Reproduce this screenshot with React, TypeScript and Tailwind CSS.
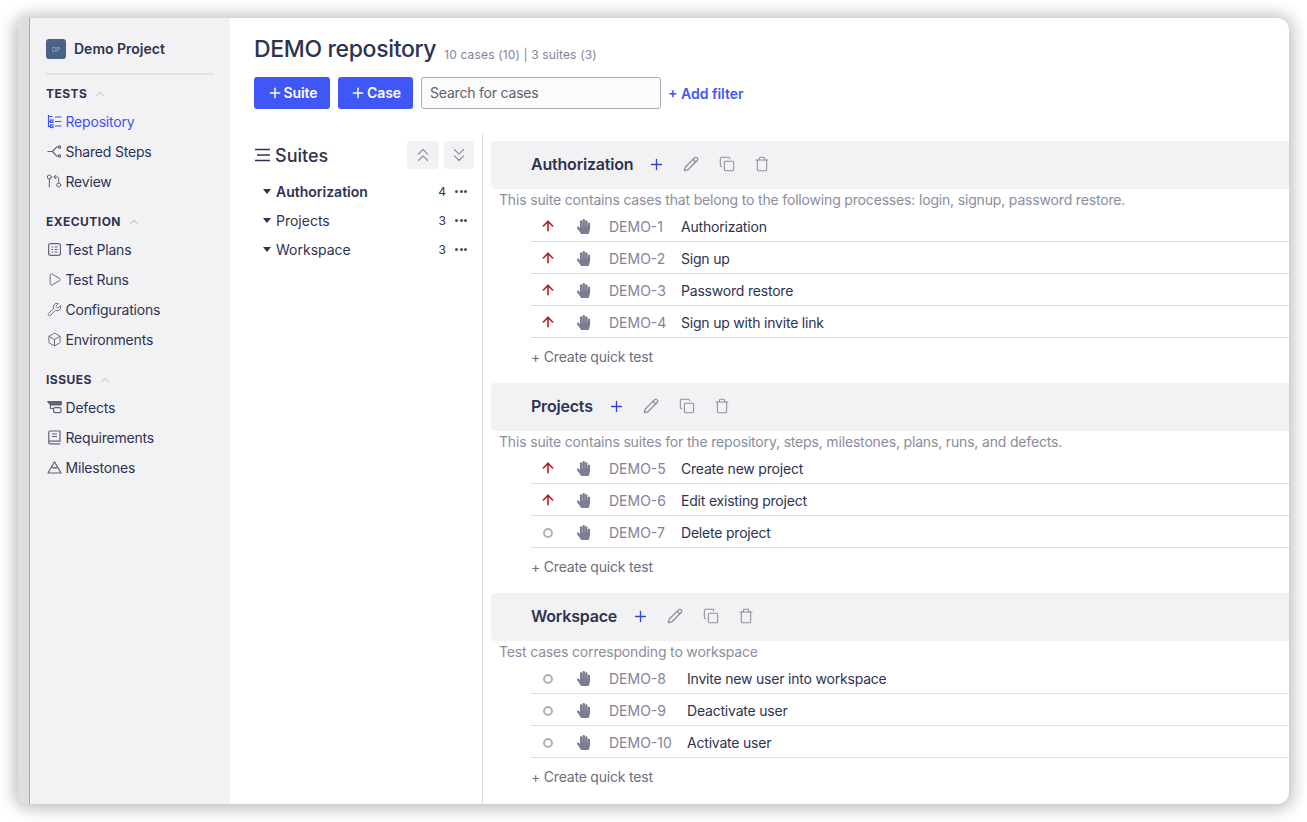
import { ArrowUp, Box, ChevronsDown, ChevronsUp, ChevronUp, Copy, GitPullRequestArrow, Pencil, Play, Plus, Trash, Wrench } from "lucide-react";
import { FaHandPaper } from "react-icons/fa";
import type { ReactNode } from "react";

const iconClass = "w-[15px] h-[15px] text-[#5f6478]";

function RepoIcon() {
    return (
        <svg viewBox="0 0 15 15" fill="none" stroke="#3f51f5" strokeWidth="1.2" className="w-[15px] h-[15px]">
            <path d="M1.5 1v12M1.5 2.5h4M1.5 7.5h2M1.5 12.5h2" />
            <path d="M8 3h6.5M8 7.5h6.5M8 12h6.5" />
            <rect x="3.5" y="6" width="2.5" height="2.5" />
            <rect x="3.5" y="11" width="2.5" height="2.5" />
        </svg>
    );
}

function StepsIcon() {
    return (
        <svg viewBox="0 0 15 15" fill="none" stroke="#5f6478" strokeWidth="1.2" className={iconClass}>
            <path d="M0.5 7.5h5l4-4.5h2M5.5 7.5l4 4.5h2" />
            <circle cx="12.5" cy="3" r="1.2" />
            <circle cx="12.5" cy="12" r="1.2" />
        </svg>
    );
}

function PlanIcon() {
    return (
        <svg viewBox="0 0 15 15" fill="none" stroke="#5f6478" strokeWidth="1.2" className={iconClass}>
            <rect x="1.6" y="1.6" width="11.8" height="11.8" rx="2" />
            <path d="M4.5 5h1.5M4.5 7.5h1.5M4.5 10h1.5M7.5 5h3M7.5 7.5h3M7.5 10h3" />
        </svg>
    );
}

function DefectIcon() {
    return (
        <svg viewBox="0 0 15 15" fill="none" stroke="#5f6478" strokeWidth="1.2" className={iconClass}>
            <path d="M0.7 1.5h13.6v2.5a1 1 0 0 1-1 1H3.5z" fill="#5f6478" />
            <path d="M3.5 5v3.5h3" />
            <rect x="6.5" y="7.7" width="7.5" height="5" rx="1.6" />
        </svg>
    );
}

function BookIcon() {
    return (
        <svg viewBox="0 0 15 15" fill="none" stroke="#5f6478" strokeWidth="1.2" className={iconClass}>
            <path d="M1.8 12V2.2A1.2 1.2 0 0 1 3 1h10v10.2H3a1 1 0 0 0-1.2 1A1.2 1.2 0 0 0 3 13.8h10.2" />
            <path d="M5 4h5M5 6.5h5" />
        </svg>
    );
}

function MountainIcon() {
    return (
        <svg viewBox="0 0 15 15" fill="none" stroke="#5f6478" strokeWidth="1.2" strokeLinejoin="round" className={iconClass}>
            <path d="M7.5 1.8L14 13H1z" />
            <path d="M4.6 6.8l2 1.6 1-1 1.2 1 1.6-1.6" />
        </svg>
    );
}

function MenuItem({ icon, label, active }: { icon: ReactNode; label: string; active?: boolean }) {
    return (
        <div className={"h-[30px] flex items-center gap-[3.5px] text-[14px] tracking-[-0.2px] " + (active ? "text-[#3f51f5]" : "text-[#2d3350]")}>
            <span className="w-[16px] flex justify-center">{icon}</span>
            <span>{label}</span>
        </div>
    );
}

function GroupTitle({ title }: { title: string }) {
    return (
        <div className="flex items-center gap-[6px] h-[22px] text-[12px] font-bold tracking-[0.45px] text-[#2d3350]">
            {title}
            <ChevronUp className="w-[14px] h-[14px] text-[#cfd0d6]" />
        </div>
    );
}

function Priority({ high }: { high: boolean }) {
    if (high) return <ArrowUp className="w-[16px] h-[16px] mb-[1px] text-[#b71c1c]" strokeWidth={2.4} />;
    return <span className="w-[10px] h-[10px] rounded-full border-2 border-[#b0b2ba]" />;
}

type Case = { id: string; title: string; high: boolean };

function CaseRow({ item, wide }: { item: Case; wide?: boolean }) {
    return (
        <div className="h-[32px] pt-[2px] ml-[40px] flex items-center border-b border-[#dcdde1] text-[14px] tracking-[-0.2px]">
            <span className="w-[34px] flex justify-center"><Priority high={item.high} /></span>
            <span className="w-[26px] flex justify-center ml-[5px]"><FaHandPaper className="w-[15px] h-[15px] text-[#7b7e90]" /></span>
            <span className={"ml-[13px] text-[#80849a] tracking-normal " + (wide ? "w-[78px]" : "w-[72px]")}>{item.id}</span>
            <span className="text-[#2d3350]">{item.title}</span>
        </div>
    );
}

function SuiteBlock({ title, desc, cases, wide, selectable }: { title: string; desc: string; cases: Case[]; wide?: boolean; selectable?: boolean }) {
    return (
        <section>
            <div className={"h-[48px] pb-[2px] bg-[#f2f2f5] rounded-l-[4px] flex items-center " + (selectable ? "pl-[17px]" : "pl-[40px]")}>
                {selectable && <span className="w-[15px] h-[15px] mr-[8px] rounded-[2px] border border-[#eeeef1]" />}
                <h3 className="text-[16px] font-semibold tracking-[-0.2px] text-[#2d3350]">{title}</h3>
                <Plus className="w-[17px] h-[17px] ml-[15px] text-[#2f45d8]" strokeWidth={1.9} />
                <Pencil className="w-[16px] h-[16px] ml-[18px] text-[#8d909f]" strokeWidth={2} />
                <Copy className="w-[16px] h-[16px] ml-[20px] text-[#8d909f]" strokeWidth={1.6} />
                <Trash className="w-[16px] h-[16px] ml-[19px] text-[#8d909f]" strokeWidth={1.6} />
            </div>
            <p className="h-[21px] pl-[8px] text-[14px] tracking-[-0.17px] leading-[22px] text-[#8a8d9c]">{desc}</p>
            {cases.map((c) => <CaseRow key={c.id} item={c} wide={wide} />)}
            <div className="h-[45px] pb-[9px] ml-[40px] flex items-center text-[14px] tracking-[-0.2px] text-[#6b6e7c]">+ Create quick test</div>
        </section>
    );
}

function TreeRow({ name, count, bold }: { name: string; count: number; bold?: boolean }) {
    return (
        <div className="h-[29px] flex items-center text-[14px] text-[#2d3350]">
            <span className="ml-[9px] w-0 h-0 border-x-[4.5px] border-x-transparent border-t-[5px] border-t-[#2d3350]" />
            <span className={"ml-[5px] flex-1 " + (bold ? "font-semibold" : "")}>{name}</span>
            <span className="text-[12px]">{count}</span>
            <span className="ml-[9px] mr-[7px] flex gap-[1.5px]">
                <i className="w-[3px] h-[3px] rounded-full bg-[#4a4f66]" />
                <i className="w-[3px] h-[3px] rounded-full bg-[#4a4f66]" />
                <i className="w-[3px] h-[3px] rounded-full bg-[#4a4f66]" />
            </span>
        </div>
    );
}

const authCases: Case[] = [
    { id: "DEMO-1", title: "Authorization", high: true },
    { id: "DEMO-2", title: "Sign up", high: true },
    { id: "DEMO-3", title: "Password restore", high: true },
    { id: "DEMO-4", title: "Sign up with invite link", high: true },
];
const projectCases: Case[] = [
    { id: "DEMO-5", title: "Create new project", high: true },
    { id: "DEMO-6", title: "Edit existing project", high: true },
    { id: "DEMO-7", title: "Delete project", high: false },
];
const workspaceCases: Case[] = [
    { id: "DEMO-8", title: "Invite new user into workspace", high: false },
    { id: "DEMO-9", title: "Deactivate user", high: false },
    { id: "DEMO-10", title: "Activate user", high: false },
];

export default function App() {
    return (
        <div className="w-[1307px] h-[822px] pt-[18px] pl-[18px] overflow-hidden bg-white font-['Inter',sans-serif]">
            <div className="w-[1271px] h-[786px] flex rounded-[12px] overflow-hidden bg-white shadow-[0_1px_16px_4px_rgba(0,0,0,0.26)]">
                <div className="w-[12px] bg-[#dedede] border-r border-[#a8a8a8]" />
                <aside className="w-[200px] bg-[#f2f2f5] px-[16px] pt-[21px]">
                    <div className="h-[34px] flex items-start gap-[8px] border-b-2 border-[#e3e3e6] box-content">
                        <span className="w-[20px] h-[20px] rounded-[3px] bg-[#4a6285] text-[6px] text-[#a9b6c9] flex items-center justify-center">DP</span>
                        <span className="text-[14px] font-semibold leading-[20px] text-[#2d3350]">Demo Project</span>
                    </div>
                    <div className="mt-[8px]"><GroupTitle title="TESTS" /></div>
                    <div className="mt-[1px]">
                        <MenuItem active icon={<RepoIcon />} label="Repository" />
                        <MenuItem icon={<StepsIcon />} label="Shared Steps" />
                        <MenuItem icon={<GitPullRequestArrow className="w-[16px] h-[16px] text-[#5f6478]" strokeWidth={1.5} />} label="Review" />
                    </div>
                    <div className="mt-[15px]"><GroupTitle title="EXECUTION" /></div>
                    <div className="mt-[1px]">
                        <MenuItem icon={<PlanIcon />} label="Test Plans" />
                        <MenuItem icon={<Play className={iconClass} strokeWidth={1.5} />} label="Test Runs" />
                        <MenuItem icon={<Wrench className={iconClass} strokeWidth={1.5} />} label="Configurations" />
                        <MenuItem icon={<Box className={iconClass} strokeWidth={1.5} />} label="Environments" />
                    </div>
                    <div className="mt-[15px]"><GroupTitle title="ISSUES" /></div>
                    <div className="mt-[1px]">
                        <MenuItem icon={<DefectIcon />} label="Defects" />
                        <MenuItem icon={<BookIcon />} label="Requirements" />
                        <MenuItem icon={<MountainIcon />} label="Milestones" />
                    </div>
                </aside>
                <main className="flex-1 min-w-0 flex flex-col">
                    <div className="h-[115px] pl-[24px] pt-[15px]">
                        <div className="flex items-end gap-[8px] h-[33px]">
                            <h1 className="text-[23px] leading-[33px] font-medium tracking-[-0.35px] text-[#2d3350]">DEMO repository</h1>
                            <span className="pb-[3px] text-[12px] leading-[16px] text-[#80849a] tracking-[0.15px]">10 cases (10) | 3 suites (3)</span>
                        </div>
                        <div className="mt-[11px] flex items-center gap-[8px]">
                            <button className="h-[32px] w-[76px] pb-[1px] rounded-[3px] bg-[#3f57f6] text-white text-[14px] font-semibold tracking-[-0.1px] flex items-center justify-center gap-[1px]"><Plus className="w-[16px] h-[16px]" strokeWidth={2.2} />Suite</button>
                            <button className="h-[32px] w-[75px] pb-[1px] rounded-[3px] bg-[#3f57f6] text-white text-[14px] font-semibold tracking-[-0.1px] flex items-center justify-center gap-[1px]"><Plus className="w-[16px] h-[16px]" strokeWidth={2.2} />Case</button>
                            <input readOnly placeholder="Search for cases" className="h-[32px] w-[240px] pb-[2px] rounded-[3px] border border-[#a9abb3] bg-[#fbfbfb] px-[8px] text-[14px] tracking-[-0.2px] placeholder:text-[#5e6170] outline-none" />
                            <span className="-ml-[1px] text-[14px] font-semibold text-[#3f57f6]">+ Add filter</span>
                        </div>
                    </div>
                    <div className="flex-1 flex min-h-0">
                        <div className="w-[253px] border-r border-[#dcdde1] pl-[24px] pr-[8px] pt-[8px]">
                            <div className="h-[28px] flex items-center">
                                <svg viewBox="0 0 17 14" fill="none" stroke="#2d3350" strokeWidth="1.4" className="w-[17px] h-[14px]">
                                    <path d="M1 1.5h15M3 7h13M1 12.5h15" />
                                </svg>
                                <h2 className="ml-[4px] flex-1 text-[18px] font-medium text-[#2d3350]">Suites</h2>
                                <span className="w-[32px] h-[28px] rounded-[4px] bg-[#f2f2f5] flex items-center justify-center"><ChevronsUp className="w-[22px] h-[22px] text-[#8d909f]" strokeWidth={1.3} /></span>
                                <span className="ml-[5px] w-[30px] h-[28px] rounded-[4px] bg-[#f2f2f5] flex items-center justify-center"><ChevronsDown className="w-[22px] h-[22px] text-[#8d909f]" strokeWidth={1.3} /></span>
                            </div>
                            <div className="mt-[8px]">
                                <TreeRow name="Authorization" count={4} bold />
                                <TreeRow name="Projects" count={3} />
                                <TreeRow name="Workspace" count={3} />
                            </div>
                        </div>
                        <div className="flex-1 min-w-0 pl-[8px] pt-[8px]">
                            <SuiteBlock selectable title="Authorization" desc="This suite contains cases that belong to the following processes: login, signup, password restore." cases={authCases} />
                            <SuiteBlock title="Projects" desc="This suite contains suites for the repository, steps, milestones, plans, runs, and defects." cases={projectCases} />
                            <SuiteBlock title="Workspace" desc="Test cases corresponding to workspace" cases={workspaceCases} wide />
                        </div>
                    </div>
                </main>
            </div>
        </div>
    );
}
